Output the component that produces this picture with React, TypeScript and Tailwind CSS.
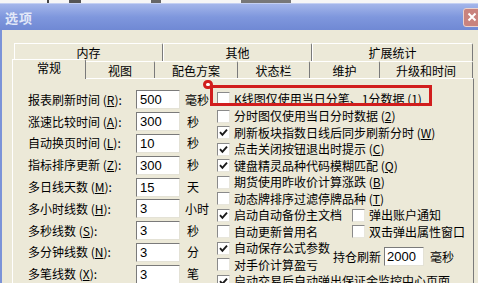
import React from 'react';

const font = { fontFamily: '"Noto Sans CJK SC", "Liberation Sans", sans-serif' };

function Box({ checked }: { checked?: boolean }) {
  return (
    <span className="w-[13px] h-[13px] shrink-0 bg-white border-t border-l border-t-[#8a8a8a] border-l-[#8a8a8a] border-r border-b border-r-[#e8e6dc] border-b-[#e8e6dc] flex items-center justify-center">
      {checked && (
        <svg width="9" height="9" viewBox="0 0 9 9">
          <path d="M1 4.2 L3.4 6.8 L8 1.6" fill="none" stroke="#1a1a1a" strokeWidth="1.9" />
        </svg>
      )}
    </span>
  );
}

function Check({ label, checked, className = '' }: { label: React.ReactNode; checked?: boolean; className?: string }) {
  return (
    <div className={`flex items-center gap-[4px] whitespace-nowrap ${className}`}>
      <Box checked={checked} />
      <span>{label}</span>
    </div>
  );
}

function Key({ k }: { k: string }) {
  return (
    <>
      {' '}(<u>{k}</u>)
    </>
  );
}

function Field({ label, k, value, unit }: { label: string; k: string; value: string; unit: string }) {
  return (
    <div className="flex items-center h-[21.8px]">
      <span className="w-[108px] whitespace-nowrap">
        {label}
        <Key k={k} />:
      </span>
      <div className="w-[44px] h-[19px] bg-white border-t border-l border-t-[#7a7a7a] border-l-[#7a7a7a] border-r border-b border-r-[#e4e2d6] border-b-[#e4e2d6] pl-[3px] flex items-center text-[13px] leading-none font-['Liberation_Sans']">
        {value}
      </div>
      <span className={unit.length > 1 ? 'ml-[5px]' : 'ml-[7px]'}>{unit}</span>
    </div>
  );
}

const backTabs = [
  { t: '内存', w: 'w-[149px]' },
  { t: '其他', w: 'w-[149px]' },
  { t: '扩展统计', w: 'w-[161px]' },
];

const frontTabs = [
  { t: '视图', w: 'w-[69px]' },
  { t: '配色方案', w: 'w-[83px]' },
  { t: '状态栏', w: 'w-[72px]' },
  { t: '维护', w: 'w-[70px]' },
  { t: '升级和时间', w: 'w-[93px]' },
];

export default function App() {
  return (
    <div className="w-[478px] h-[283px] overflow-hidden relative bg-[#ece9d8] text-[12px] text-black leading-none" style={font}>
      {/* bits of the window behind */}
      <div className="h-[3px] bg-[#f6f6f6] flex">
        <span className="ml-[47px] w-[2px] bg-[#444]" />
        <span className="ml-[20px] w-[12px] bg-[#555]" />
        <span className="ml-[70px] w-[10px] bg-[#666]" />
        <span className="ml-[80px] w-[50px] bg-[#777]" />
      </div>

      {/* title bar */}
      <div className="h-[27px] flex items-center pl-[5px] bg-gradient-to-b from-[#a4b6ea] via-[#7f97dd] to-[#7089d4] border-t border-[#c4d0f2]">
        <span className="text-[13px] font-bold text-[#e2e8f8] tracking-[1px]">选项</span>
        <div className="ml-auto mr-[-3px] w-[18px] h-[19px] rounded-[3px] bg-[#c9837e] border border-[#ecd2cc] flex items-center justify-center">
          <svg width="10" height="10" viewBox="0 0 10 10">
            <path d="M1.5 1.5 L8.5 8.5 M8.5 1.5 L1.5 8.5" stroke="#fff" strokeWidth="2" />
          </svg>
        </div>
      </div>

      <div className="flex h-[253px]">
        <div className="w-[2px] bg-[#7b93d8]" />
        <div className="flex-1 pl-[10px] pt-[13px]">
          {/* back tab row */}
          <div className="flex ml-[2px] h-[18px]">
            {backTabs.map((b) => (
              <div key={b.t} className={`${b.w} h-[18px] border-t border-l border-white border-r border-r-[#7a7a7a] rounded-tr-[2px] flex justify-center pt-[3px]`}>
                {b.t}
              </div>
            ))}
          </div>

          {/* front tab row */}
          <div className="flex items-end h-[19px] mt-[-2px] relative z-10">
            <div className="w-[74px] h-[20px] mb-[-1px] bg-[#ece9d8] border-t border-l border-white border-r border-r-[#7a7a7a] rounded-tr-[2px] flex justify-center pt-[2px]">
              常规
            </div>
            {frontTabs.map((f) => (
              <div key={f.t} className={`${f.w} h-[17px] bg-[#ece9d8] border-t border-white border-r border-r-[#7a7a7a] rounded-tr-[2px] flex justify-center pt-[3px]`}>
                {f.t}
              </div>
            ))}
          </div>

          {/* panel */}
          <div className="w-[462px] h-[240px] border-t border-l border-white border-r border-r-[#7a7a7a] pt-[10px] pl-[15px] flex">
            <div className="w-[189px] flex flex-col">
              <Field label="报表刷新时间" k="R" value="500" unit="毫秒" />
              <Field label="涨速比较时间" k="A" value="300" unit="秒" />
              <Field label="自动换页时间" k="L" value="10" unit="秒" />
              <Field label="指标排序更新" k="Z" value="300" unit="秒" />
              <Field label="多日线天数" k="M" value="15" unit="天" />
              <Field label="多小时线数" k="H" value="3" unit="小时" />
              <Field label="多秒线数" k="S" value="3" unit="秒" />
              <Field label="多分钟线数" k="N" value="3" unit="分" />
              <Field label="多笔线数" k="X" value="3" unit="笔" />
            </div>

            <div className="flex flex-col">
              <div className="h-[19px] flex items-center">
                <Check label={<>K线图仅使用当日分笔、1分数据<Key k="1" /></>} />
              </div>
              <div className="h-[16.5px] flex items-center">
                <Check label={<>分时图仅使用当日分时数据<Key k="2" /></>} />
              </div>
              <div className="h-[16.5px] flex items-center">
                <Check checked label={<>刷新板块指数日线后同步刷新分时<Key k="W" /></>} />
              </div>
              <div className="h-[16.5px] flex items-center">
                <Check checked label={<>点击关闭按钮退出时提示<Key k="C" /></>} />
              </div>
              <div className="h-[16.5px] flex items-center">
                <Check checked label={<>键盘精灵品种代码模糊匹配<Key k="Q" /></>} />
              </div>
              <div className="h-[16.5px] flex items-center">
                <Check label={<>期货使用昨收价计算涨跌<Key k="B" /></>} />
              </div>
              <div className="h-[16.5px] flex items-center">
                <Check label={<>动态牌排序过滤停牌品种<Key k="T" /></>} />
              </div>
              <div className="h-[16.5px] flex items-center">
                <Check checked label="启动自动备份主文档" className="w-[135px]" />
                <Check label="弹出账户通知" />
              </div>
              <div className="h-[16.5px] flex items-center">
                <Check label="自动更新曾用名" className="w-[135px]" />
                <Check label="双击弹出属性窗口" />
              </div>
              <div className="flex items-center">
                <div className="w-[116px] flex flex-col">
                  <div className="h-[16.5px] flex items-center">
                    <Check checked label="自动保存公式参数" />
                  </div>
                  <div className="h-[16.5px] flex items-center">
                    <Check label="对手价计算盈亏" />
                  </div>
                </div>
                <span className="whitespace-nowrap">持仓刷新</span>
                <div className="ml-[3px] w-[40px] h-[19px] bg-white border-t border-l border-t-[#7a7a7a] border-l-[#7a7a7a] border-r border-b border-r-[#e4e2d6] border-b-[#e4e2d6] pl-[2px] flex items-center text-[13px] leading-none font-['Liberation_Sans']">
                  2000
                </div>
                <span className="ml-[6px]">毫秒</span>
              </div>
              <div className="h-[16.5px] flex items-center">
                <Check checked label="启动交易后自动弹出保证金监控中心页面" />
              </div>
            </div>
          </div>
        </div>
      </div>

      {/* red annotation */}
      <div className="absolute left-[210px] top-[85px] w-[222px] h-[21px] border-[3px] border-[#d11d1d] pointer-events-none" />
      <div className="absolute left-[203px] top-[80px] w-[10px] h-[9px] rounded-full border-[3px] border-[#d11d1d] bg-white pointer-events-none" />
    </div>
  );
}
